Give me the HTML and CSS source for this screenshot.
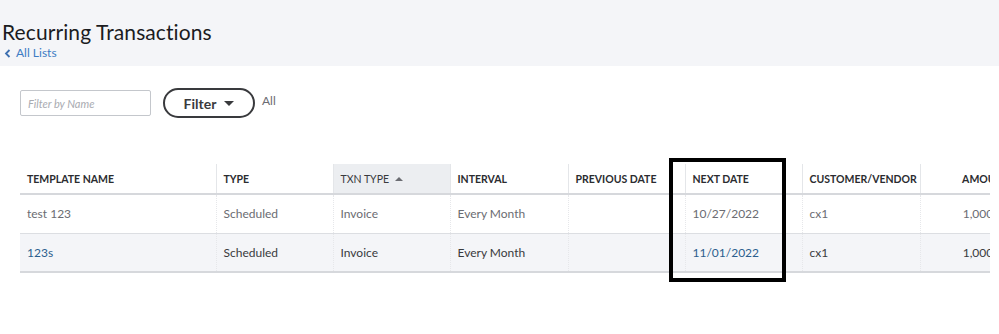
FILE: index.html
```html
<!DOCTYPE html>
<html lang="en">
<head>
  <meta charset="UTF-8" />
  <title>Recurring Transactions</title>
  <link rel="stylesheet" href="styles.css">
</head>
<body>

  <div class="page-head">
    <h1>Recurring Transactions</h1>
    <a href="#" class="back-link">
      <svg width="7" height="9" viewBox="0 0 7 9"><path d="M5.5 1 L2 4.5 L5.5 8" fill="none" stroke="#3d6fb0" stroke-width="1.8"/></svg>
      All Lists
    </a>
  </div>

  <div class="content">
    <div class="toolbar">
      <input type="text" class="name-filter" placeholder="Filter by Name" />
      <button class="filter-btn">Filter <span class="caret"></span></button>
      <span class="filter-state">All</span>
    </div>

    <div class="table-wrap">
      <table class="list">
        <colgroup>
          <col class="w-name">
          <col class="w-col">
          <col class="w-col">
          <col class="w-col-wide">
          <col class="w-col">
          <col class="w-col">
          <col class="w-col-wide">
          <col class="w-amount">
        </colgroup>
        <thead>
          <tr>
            <th class="c-name">TEMPLATE NAME</th>
            <th>TYPE</th>
            <th class="sorted">TXN TYPE <span class="sort-up"></span></th>
            <th>INTERVAL</th>
            <th>PREVIOUS DATE</th>
            <th>NEXT DATE</th>
            <th>CUSTOMER/VENDOR</th>
            <th class="num">AMOUNT</th>
          </tr>
        </thead>
        <tbody>
          <tr>
            <td class="c-name">test 123</td>
            <td>Scheduled</td>
            <td>Invoice</td>
            <td>Every Month</td>
            <td></td>
            <td>10/27/2022</td>
            <td>cx1</td>
            <td class="num">1,000.00</td>
          </tr>
          <tr class="hover">
            <td class="c-name link">123s</td>
            <td>Scheduled</td>
            <td>Invoice</td>
            <td>Every Month</td>
            <td></td>
            <td class="link">11/01/2022</td>
            <td>cx1</td>
            <td class="num">1,000.00</td>
          </tr>
        </tbody>
      </table>
      <!-- annotation box drawn over the screenshot -->
      <div class="highlight"></div>
    </div>
  </div>

</body>
</html>
```

FILE: styles.css
```css
* {
  box-sizing: border-box;
  margin: 0;
  padding: 0;
}

body {
  font-family: Lato, "Open Sans", sans-serif;
  background: #fff;
  color: #393a3d;
  width: 999px;
  height: 334px;
  overflow: hidden;
}

.page-head {
  background: #f4f5f8;
  height: 66px;
  padding: 18px 0 0 2px;
}

.page-head h1 {
  font-size: 21px;
  font-weight: 400;
  color: #1b1c1f;
  line-height: 28px;
  letter-spacing: 0.1px;
}

.back-link {
  display: flex;
  align-items: center;
  gap: 5px;
  font-size: 12px;
  color: #3d7cc4;
  text-decoration: none;
  line-height: 14px;
  margin-left: 2px;
}

.content {
  padding: 22px 0 0 20px;
}

.toolbar {
  display: flex;
  align-items: center;
  height: 30px;
}

.name-filter {
  width: 131px;
  height: 26px;
  border: 1px solid #c4c7cc;
  border-radius: 2px;
  padding: 0 7px;
  font-family: inherit;
  font-size: 11px;
}

.name-filter::placeholder {
  color: #a9abb1;
  font-style: italic;
}

.filter-btn {
  margin-left: 12px;
  width: 92px;
  height: 30px;
  border: 2px solid #393a3d;
  border-radius: 16px;
  background: #fff;
  font-family: inherit;
  font-size: 14px;
  font-weight: 700;
  color: #393a3d;
  display: flex;
  align-items: center;
  justify-content: center;
  gap: 8px;
}

.caret {
  width: 0;
  height: 0;
  border-left: 5px solid transparent;
  border-right: 5px solid transparent;
  border-top: 5px solid #393a3d;
}

.filter-state {
  margin-left: 7px;
  margin-top: -6px;
  font-size: 12px;
  color: #6b6c72;
}

/* table is scrolled horizontally in the app, clipped at the right */
.table-wrap {
  position: relative;
  margin-top: 46px;
  width: 970px;
  padding-top: 6px;
  margin-top: 40px;
  padding-bottom: 12px;
  overflow: hidden;
}

.list {
  border-collapse: collapse;
  width: 1060px;
  table-layout: fixed;
  font-size: 12px;
}

.w-name { width: 196px; }
.w-col { width: 117px; }
.w-col-wide { width: 118px; }
.w-amount { width: 160px; }

.list th {
  height: 30px;
  text-align: left;
  font-size: 10.5px;
  font-weight: 700;
  color: #2b2c30;
  padding: 0 7px;
  border-left: 1px solid #e4e6e9;
  border-bottom: 2px solid #d6d8dc;
  white-space: nowrap;
  overflow: hidden;
}

.list th.c-name {
  border-left: none;
}

.list th.sorted {
  background: #eceef1;
  font-weight: 400;
  color: #393a3d;
}

.sort-up {
  display: inline-block;
  margin-left: 3px;
  vertical-align: 2px;
  border-left: 4px solid transparent;
  border-right: 4px solid transparent;
  border-bottom: 4px solid #6b6c72;
}

.list td {
  height: 39px;
  padding: 0 7px;
  color: #6b6c72;
  border-left: 1px dotted #e6e7ea;
  border-bottom: 1px solid #dcdee2;
  white-space: nowrap;
}

.list td.c-name {
  border-left: none;
}

.list tr.hover td {
  background: #f4f5f8;
  color: #393a3d;
  border-bottom: 2px solid #d6d8dc;
}

.list tr.hover td.link {
  color: #2c5e8e;
}

.list .num {
  text-align: right;
  padding-right: 70px;
}

.highlight {
  position: absolute;
  left: 649px;
  top: 0;
  width: 117px;
  height: 124px;
  border: 4px solid #000;
}
```
